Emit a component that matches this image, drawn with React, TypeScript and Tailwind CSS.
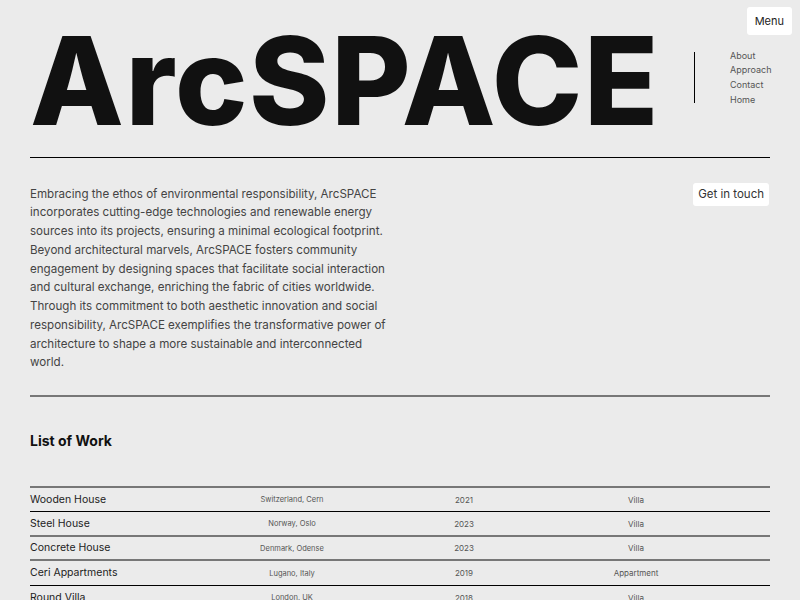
import React from "react";

const works = [
  { name: "Wooden House", place: "Switzerland, Cern", year: "2021", type: "Villa", line: "border-black border-b" },
  { name: "Steel House", place: "Norway, Oslo", year: "2023", type: "Villa", line: "border-[#777] border-b-2" },
  { name: "Concrete House", place: "Denmark, Odense", year: "2023", type: "Villa", line: "border-[#777] border-b-2" },
  { name: "Ceri Appartments", place: "Lugano, Italy", year: "2019", type: "Appartment", line: "border-black border-b" },
  { name: "Round Villa", place: "London, UK", year: "2018", type: "Villa", line: "border-black border-b" },
];

const navLinks = ["About", "Approach", "Contact", "Home"];

const intro = [
  "Embracing the ethos of environmental responsibility, ArcSPACE",
  "incorporates cutting-edge technologies and renewable energy",
  "sources into its projects, ensuring a minimal ecological footprint.",
  "Beyond architectural marvels, ArcSPACE fosters community",
  "engagement by designing spaces that facilitate social interaction",
  "and cultural exchange, enriching the fabric of cities worldwide.",
  "Through its commitment to both aesthetic innovation and social",
  "responsibility, ArcSPACE exemplifies the transformative power of",
  "architecture to shape a more sustainable and interconnected",
  "world.",
];

export default function App() {
  return (
    <div className="relative min-h-screen bg-[#ebebeb] px-[30px] font-['Inter','Liberation_Sans',sans-serif] text-[#111]">
      <button className="absolute right-[8px] top-[7px] h-[28px] rounded-[3px] bg-white px-[8px] text-[11px] text-[#222]">
        Menu
      </button>

      <header className="flex items-start pt-[20px]">
        <h1 className="text-[122px] font-extrabold leading-none tracking-[0.013em] text-[#111]">
          ArcSPACE
        </h1>
        <div className="ml-auto mt-[28.5px] flex items-start gap-[35px]">
          <div className="mt-[3.5px] h-[51px] w-px bg-black" />
          <nav className="flex w-[40px] flex-col text-[9px] leading-[14.67px] text-[#555]">
            {navLinks.map(link => (
              <a key={link} href="#">
                {link}
              </a>
            ))}
          </nav>
        </div>
      </header>

      <div className="mt-[15px] h-px bg-black" />

      <section className="flex items-start justify-between pt-[26.5px]">
        <p className="w-[400px] whitespace-nowrap text-[11.6px] leading-[18.75px] text-[#444]">
          {intro.map((line, i) => (
            <React.Fragment key={i}>
              {line}
              {i < intro.length - 1 && <br />}
            </React.Fragment>
          ))}
        </p>
        <button className="mr-px mt-[-1.5px] h-[23px] rounded-[3px] bg-white px-[5px] text-[11.5px] text-[#333]">
          Get in touch
        </button>
      </section>

      <div className="mt-[22.5px] h-[2px] bg-[#777]" />

      <h2 className="mt-[34px] text-[14px] font-bold leading-[20px] text-[#111]">
        List of Work
      </h2>

      <div className="mt-[35px] border-t-2 border-[#777]">
        {works.map(w => (
          <div
            key={w.name}
            className={`grid h-[24.5px] grid-cols-[170px_184px_160px_184px_1fr] items-center pt-px ${w.line}`}
          >
            <span className="text-[10.5px] text-[#222]">{w.name}</span>
            <span className="text-center text-[7.5px] text-[#555]">{w.place}</span>
            <span className="text-center text-[8px] text-[#555]">{w.year}</span>
            <span className="text-center text-[8px] text-[#555]">{w.type}</span>
            <span />
          </div>
        ))}
      </div>
    </div>
  );
}
